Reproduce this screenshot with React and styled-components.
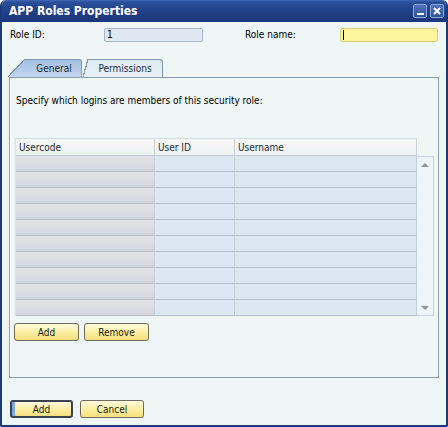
import React from "react";
import styled, { createGlobalStyle } from "styled-components";

const UI_FONT = `"DejaVu Sans Condensed", "DejaVu Sans", "Liberation Sans", sans-serif`;
const BODY_BG = "#eff6f6";

const GlobalStyle = createGlobalStyle`
  html, body { margin: 0; padding: 0; background: #ffffff; }
  body { font-family: ${UI_FONT}; font-size: 10px; color: #000; }
  * { box-sizing: border-box; }
`;

const Window = styled.div`
  width: 448px;
  height: 427px;
  display: flex;
  flex-direction: column;
  background: ${BODY_BG};
  border: 2px solid #1b3a7c;
  border-top: 0;
  border-radius: 6px 6px 2px 2px;
  overflow: hidden;
`;

const TitleBar = styled.div`
  height: 22px;
  flex: none;
  margin: 0 -2px;
  display: flex;
  align-items: center;
  padding: 0 4px 0 9px;
  background: linear-gradient(#4169b6 0px, #2a4f9a 2px, #203f87 55%, #1a377a 100%);
`;

const Title = styled.div`
  flex: 1;
  color: #ffffff;
  font-weight: bold;
  font-size: 12px;
`;

const TitleButton = styled.div`
  width: 14px;
  height: 14px;
  margin-left: 3px;
  border: 1px solid #8ea8da;
  border-radius: 2px;
  background: linear-gradient(#4d72bc, #2f5299);
  display: flex;
  align-items: center;
  justify-content: center;
`;

const MinGlyph = styled.div`
  width: 7px;
  height: 2px;
  background: #ffffff;
  margin-top: 6px;
`;

const Content = styled.div`
  flex: 1;
  display: flex;
  flex-direction: column;
`;

const FieldRow = styled.div`
  margin-top: 6px;
  padding-left: 8px;
  display: grid;
  grid-template-columns: 94px 99px 42px 95px 98px;
  height: 14px;
  align-items: center;
`;

const Label = styled.div`
  line-height: 14px;
`;

const TextBox = styled.div`
  height: 14px;
  border: 1px solid ${(p) => (p.$active ? "#d8cf7c" : "#a9b8c8")};
  border-radius: 2px;
  background: ${(p) => (p.$active ? "#fff59c" : "#dfe7f1")};
  padding-left: 2px;
  line-height: 12px;
  display: flex;
  align-items: center;
`;

const Caret = styled.span`
  width: 1px;
  height: 10px;
  background: #000;
`;

const TabStrip = styled.div`
  margin: 17px 0 0 6px;
  height: 18px;
  display: flex;
  position: relative;
  z-index: 1;
`;

const Tab = styled.div`
  display: flex;
  height: 18px;
  margin-right: 1px;
  color: #1d2a38;

  &::before {
    content: "";
    width: ${(p) => (p.$selected ? 17 : 5)}px;
    height: 18px;
    background:
      linear-gradient(
        to bottom right,
        ${BODY_BG} calc(50% - 0.6px),
        #7f9bb6 calc(50% - 0.6px) calc(50% + 0.6px),
        transparent calc(50% + 0.6px)
      ),
      ${(p) =>
        p.$selected
          ? "linear-gradient(#a2bfe3, #c2d6ee)"
          : "linear-gradient(#dfeaf4, #eaf2f8)"};
  }
`;

const TabLabel = styled.div`
  width: ${(p) => p.$w}px;
  height: 18px;
  border-top: 1px solid #7f9bb6;
  border-right: 1px solid #7f9bb6;
  border-top-right-radius: 3px;
  background: ${(p) =>
    p.$selected
      ? "linear-gradient(#a2bfe3, #c2d6ee)"
      : "linear-gradient(#dfeaf4, #eaf2f8)"};
  display: flex;
  align-items: center;
  justify-content: center;
  padding-left: ${(p) => (p.$selected ? 2 : 0)}px;
`;

const Panel = styled.div`
  flex: 1;
  margin: 0 7px;
  border: 1px solid #8a9cae;
  box-shadow: inset 1px 0 0 #ffffff;
  padding: 17px 0 0 5px;
  display: flex;
  flex-direction: column;
`;

const Intro = styled.div`
  margin-left: 1px;
  line-height: 12px;
`;

const GridArea = styled.div`
  margin-top: 31px;
  display: flex;
  align-items: flex-start;
`;

const Table = styled.div`
  display: grid;
  grid-template-columns: 139px 80px 182px;
  border-left: 1px solid #d6dde2;
  border-top: 1px solid #d6dde2;
`;

const HeadCell = styled.div`
  height: 17px;
  padding-left: 3px;
  display: flex;
  align-items: center;
  background: linear-gradient(#f6f8f8, #eef1f2);
  border-right: 1px solid #c9d1d6;
  border-bottom: 1px solid #c3cbd2;
  color: #1d2a38;
`;

const Cell = styled.div`
  height: 16px;
  border-bottom: 1px solid ${(p) => (p.$key ? "#b7bec9" : "#b2bfcc")};
  border-right: 1px solid ${(p) => (p.$key ? "#c6cbd4" : p.$last ? "#c2cfdc" : "#c3d0c6")};
  background: ${(p) =>
    p.$key ? "linear-gradient(#e0e2e7, #d3d6dd)" : "#dde7f4"};
`;

const ScrollBar = styled.div`
  width: 17px;
  height: 160px;
  margin-top: 18px;
  border: 1px solid #c6d6e4;
  border-left: 0;
  background: #eef5f8;
  display: flex;
  flex-direction: column;
  align-items: center;
  justify-content: space-between;
  padding: 6px 0 5px;
`;

const Arrow = styled.div`
  width: 0;
  height: 0;
  border-left: 4px solid transparent;
  border-right: 4px solid transparent;
  ${(p) =>
    p.$down
      ? "border-top: 4px solid #8c959e;"
      : "border-bottom: 4px solid #8c959e;"}
`;

const ButtonRow = styled.div`
  display: flex;
  gap: ${(p) => p.$gap}px;
  margin-top: ${(p) => p.$top}px;
  margin-left: ${(p) => p.$left}px;
`;

const Button = styled.div`
  width: ${(p) => p.$w}px;
  height: 18px;
  border: ${(p) => (p.$default ? "2px solid #3a4350" : "1px solid #6f6a5c")};
  border-radius: 3px;
  background: linear-gradient(#fffce0 0%, #fdf0a8 45%, #f6e07e 100%);
  box-shadow: ${(p) => (p.$default ? "inset 3px 0 0 #7eaae4" : "none")};
  display: flex;
  align-items: center;
  justify-content: center;
  color: #1a1a1a;
`;

const Footer = styled.div`
  height: 47px;
  flex: none;
`;

const rows = Array.from({ length: 10 }, (_, i) => i);

export default function App() {
  return (
    <>
      <GlobalStyle />
      <Window>
        <TitleBar>
          <Title>APP Roles Properties</Title>
          <TitleButton>
            <MinGlyph />
          </TitleButton>
          <TitleButton>
            <svg width="10" height="10" viewBox="0 0 10 10">
              <path d="M2 2 L8 8 M8 2 L2 8" stroke="#ffffff" strokeWidth="2" />
            </svg>
          </TitleButton>
        </TitleBar>
        <Content>
          <FieldRow>
            <Label>Role ID:</Label>
            <TextBox>1</TextBox>
            <span />
            <Label>Role name:</Label>
            <TextBox $active>
              <Caret />
            </TextBox>
          </FieldRow>

          <TabStrip>
            <Tab $selected>
              <TabLabel $selected $w={57}>General</TabLabel>
            </Tab>
            <Tab>
              <TabLabel $w={75}>Permissions</TabLabel>
            </Tab>
          </TabStrip>

          <Panel>
            <Intro>Specify which logins are members of this security role:</Intro>
            <GridArea>
              <Table>
                <HeadCell>Usercode</HeadCell>
                <HeadCell>User ID</HeadCell>
                <HeadCell>Username</HeadCell>
                {rows.map((r) => (
                  <React.Fragment key={r}>
                    <Cell $key />
                    <Cell />
                    <Cell $last />
                  </React.Fragment>
                ))}
              </Table>
              <ScrollBar>
                <Arrow />
                <Arrow $down />
              </ScrollBar>
            </GridArea>
            <ButtonRow $gap={5} $top={7} $left={-1}>
              <Button $w={65}>Add</Button>
              <Button $w={65}>Remove</Button>
            </ButtonRow>
          </Panel>

          <Footer>
            <ButtonRow $gap={7} $top={22} $left={8}>
              <Button $w={63} $default>Add</Button>
              <Button $w={64}>Cancel</Button>
            </ButtonRow>
          </Footer>
        </Content>
      </Window>
    </>
  );
}
